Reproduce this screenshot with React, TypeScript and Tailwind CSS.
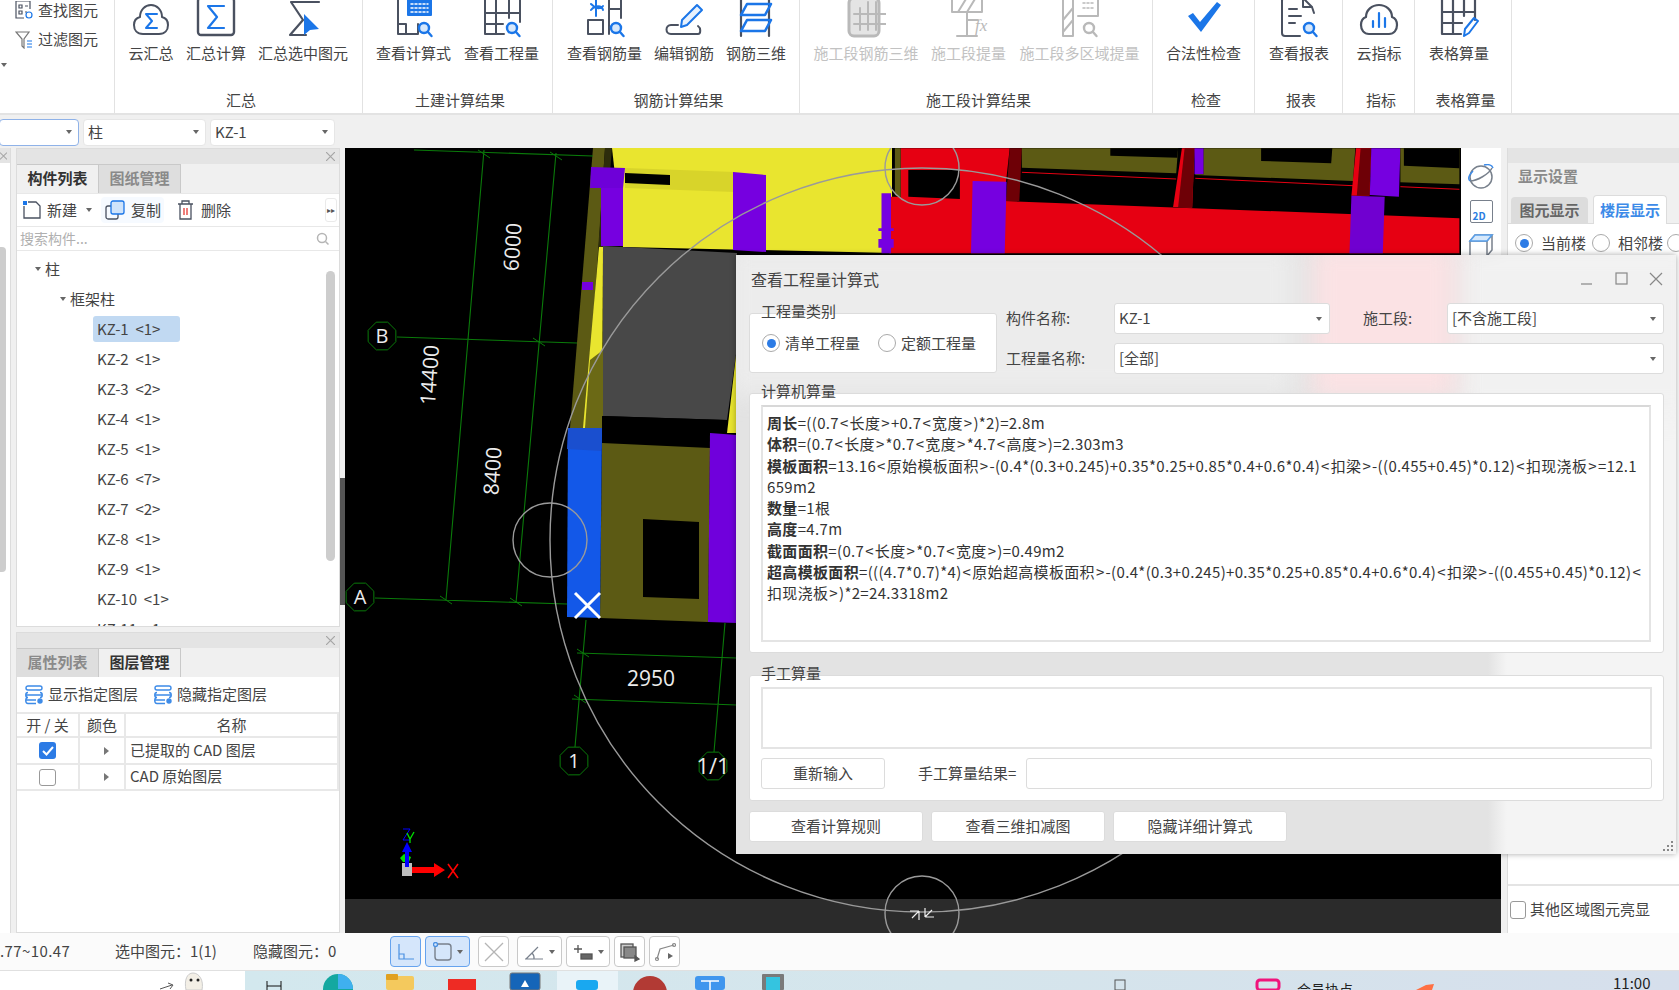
import React from "react";

const G = "#4a5160";
const B = "#1b76e8";
const L = "#b9b9b9";

function Svg({ children, w = 40, h = 40 }: { children: React.ReactNode; w?: number; h?: number }) {
  return (
    <svg width={w} height={h} viewBox={`0 0 ${w} ${h}`} fill="none" strokeWidth="2" strokeLinecap="round" strokeLinejoin="round">
      {children}
    </svg>
  );
}
const Mag = ({ c = B, x = 30, y = 28 }: { c?: string; x?: number; y?: number }) => (
  <g>
    <circle cx={x} cy={y} r="5" fill={c === B ? "#d7e8fb" : "none"} stroke={c} strokeWidth="2.4" />
    <path d={`M${x + 4} ${y + 4}l3.5 4`} stroke={c} strokeWidth="2.4" />
  </g>
);
const Ic: Record<string, React.ReactNode> = {
  cloudSum: (
    <Svg>
      <path d="M12 34c-6 0-9-4-9-9 0-4 2-7 6-8 0-7 5-12 11-12s11 5 11 12c4 1 6 4 6 8 0 5-3 9-9 9z" stroke={G} />
      <path d="M26 14h-11l6 7-6 7h11" stroke={B} />
    </Svg>
  ),
  sum: (
    <Svg>
      <rect x="2" y="-2" width="36" height="37" rx="3" stroke={G} strokeWidth="2.4" />
      <path d="M28 6h-16l9 11-9 11h16" stroke={B} strokeWidth="2.2" />
    </Svg>
  ),
  sumSel: (
    <Svg>
      <path d="M36 2h-28l12 18-13 15h16" stroke={G} strokeWidth="2.2" />
      <path d="M21 14l15 15-9 1-6 5z" fill={B} />
    </Svg>
  ),
  calc: (
    <Svg>
      <path d="M4 -3v37h20v-10M4 24h8v10" stroke={G} />
      <rect x="13" y="-2" width="25" height="18" rx="1" fill={B} />
      <path d="M17 4h17M17 8h17M17 12h17" stroke="#fff" strokeDasharray="2 2" strokeWidth="1.5" />
      <Mag x={30} y={28} />
    </Svg>
  ),
  grid: (
    <Svg>
      <path d="M22 34H3V-2h35v24M3 13h35M3 24h18M14 -2v36M27 -2v20" stroke={G} />
      <Mag x={30} y={28} />
    </Svg>
  ),
  rebar: (
    <Svg>
      <path d="M3 34V20h15v14H3M24 34V-2h12v20M24 9h12M3 -2v0" stroke={G} />
      <path d="M6 10c4-5 11-5 12 0M6 4c4 4 9 6 12 2M11 -2v18" stroke={B} />
      <Mag x={31} y={28} />
    </Svg>
  ),
  edit: (
    <Svg>
      <path d="M14 25H7c-6 0-6 9 0 9h27c3 0 3-6 0-8" stroke={G} />
      <path d="M17 27l1-7 15-15 5 5-15 15z" stroke={B} fill="#e7f1fd" />
    </Svg>
  ),
  bar3d: (
    <Svg>
      <path d="M5 -3v39M33 -3v39" stroke={G} strokeWidth="2.2" />
      <path d="M11 4h24l-6 11H5zM11 20h24l-6 11H5z" stroke={B} strokeWidth="2.6" />
    </Svg>
  ),
  g1: (
    <Svg>
      <rect x="3" y="-2" width="30" height="38" rx="5" fill="#e4e4e4" stroke={L} strokeWidth="3" />
      <path d="M14 8v22M22 2v28M30 2v28M8 14h32M8 24h32" stroke={L} />
    </Svg>
  ),
  g2: (
    <Svg>
      <path d="M3 -2h30v14H3zM9 12l8-13M18 12l8-13M18 12v24M8 36h20M19 20h10" stroke={L} />
      <text x="26" y="31" fontSize="17" fontStyle="italic" fill={L} stroke="none" fontFamily="'Liberation Serif',serif">fx</text>
    </Svg>
  ),
  g3: (
    <Svg>
      <path d="M3 36V-2h10v38zM3 20L13 8M3 32l10-12" stroke={L} />
      <path d="M18 -2h20v18H18" stroke={L} />
      <path d="M23 3h12M23 8h12" stroke={L} strokeDasharray="2 2" strokeWidth="1.5" />
      <Mag c={L} x={29} y={28} />
    </Svg>
  ),
  check: (
    <svg width="40" height="40" viewBox="0 0 40 40">
      <path d="M4 16l5-3 7 9L33 2l4 3-20 27z" fill={B} />
    </svg>
  ),
  report: (
    <Svg>
      <path d="M24 -2H6a3 3 0 0 0-3 3v32a3 3 0 0 0 3 3h15M24 -2v9h9l2 6M24 -2l9 9" stroke={G} />
      <path d="M10 9h8M10 16h12M10 23h6" stroke={G} />
      <Mag x={30} y={28} />
    </Svg>
  ),
  cloudBar: (
    <Svg>
      <path d="M10 34c-5 0-8-4-8-9 0-4 2-7 5-8 0-7 6-12 13-12s13 5 13 12c3 1 5 4 5 8 0 5-3 9-8 9z" stroke={G} strokeWidth="2.2" />
      <path d="M14 27v-6M20 27V13M26 27v-9" stroke={B} strokeWidth="2.2" />
    </Svg>
  ),
  gridEdit: (
    <Svg>
      <path d="M22 34H3V-2h33v22M3 12h33M3 23h20M14 -2v36M25 -2v18" stroke={G} strokeWidth="2.2" />
      <path d="M25 36l1-7 9-11 4 3-9 12z" stroke={B} />
    </Svg>
  ),
};

type Item = { t: string; i: string; w: number; gray?: boolean };
type Group = { label: string; w: number; pl: number; gap: number; items: Item[] };
const groups: Group[] = [
  { label: "汇总", w: 248, pl: 13, gap: 12, items: [{ t: "云汇总", i: "cloudSum", w: 46 }, { t: "汇总计算", i: "sum", w: 60 }, { t: "汇总选中图元", i: "sumSel", w: 90 }] },
  { label: "土建计算结果", w: 190, pl: 13, gap: 13, items: [{ t: "查看计算式", i: "calc", w: 75 }, { t: "查看工程量", i: "grid", w: 75 }] },
  { label: "钢筋计算结果", w: 247, pl: 14, gap: 12, items: [{ t: "查看钢筋量", i: "rebar", w: 75 }, { t: "编辑钢筋", i: "edit", w: 60 }, { t: "钢筋三维", i: "bar3d", w: 60 }] },
  { label: "施工段计算结果", w: 353, pl: 14, gap: 13, items: [{ t: "施工段钢筋三维", i: "g1", w: 104, gray: true }, { t: "施工段提量", i: "g2", w: 75, gray: true }, { t: "施工段多区域提量", i: "g3", w: 121, gray: true }] },
  { label: "检查", w: 102, pl: 13, gap: 0, items: [{ t: "合法性检查", i: "check", w: 75 }] },
  { label: "报表", w: 88, pl: 13, gap: 0, items: [{ t: "查看报表", i: "report", w: 62 }] },
  { label: "指标", w: 72, pl: 13, gap: 0, items: [{ t: "云指标", i: "cloudBar", w: 46 }] },
  { label: "表格算量", w: 97, pl: 13, gap: 0, items: [{ t: "表格算量", i: "gridEdit", w: 62 }] },
];

function Ribbon() {
  return (
    <div className="flex h-[115px] shrink-0 border-b-2 border-[#e3e3e3] bg-white">
      <div className="flex w-[115px] shrink-0 flex-col gap-[9px] border-r border-[#e2e2e2] pl-[15px] text-[15px] leading-[20px] text-[#444]">
        <div className="flex items-center gap-[4px]">
          <svg width="19" height="19" viewBox="0 0 19 19" fill="none" stroke={G} strokeWidth="1.2">
            <path d="M1 0h14v8M1 0v17h8" />
            <path d="M4 4h3v3H4zM4 10h3v3H4zM10 5h3M10 11h2" />
            <circle cx="14" cy="14" r="3" stroke={B} />
          </svg>
          <span>查找图元</span>
        </div>
        <div className="flex items-center gap-[4px]">
          <svg width="19" height="19" viewBox="0 0 19 19" fill="none" stroke="#777" strokeWidth="1.2">
            <path d="M1 2h13L9 9v9l-2-2V9z" />
            <path d="M12 11h5M12 14h5M12 17h5" stroke={B} />
          </svg>
          <span>过滤图元</span>
        </div>
        <div className="ml-[-14px] mt-[5px] h-0 w-0 border-x-[3px] border-t-[4px] border-x-transparent border-t-[#666]" />
      </div>
      {groups.map((g) => (
        <div key={g.label} className="flex shrink-0 flex-col border-r border-[#e2e2e2]" style={{ width: g.w }}>
          <div className="flex h-[91px] items-start" style={{ paddingLeft: g.pl, gap: g.gap }}>
            {g.items.map((it) => (
              <div key={it.t} className="flex flex-col items-center" style={{ width: it.w }}>
                <div className="h-[43px] overflow-hidden">{Ic[it.i]}</div>
                <div className={`whitespace-nowrap text-[15px] leading-[20px] ${it.gray ? "text-[#c2c2c2]" : "text-[#444]"}`}>{it.t}</div>
              </div>
            ))}
          </div>
          <div className="pl-[5px] text-center text-[15px] leading-[18px] text-[#444]">{g.label}</div>
        </div>
      ))}
      <div className="flex-1" />
    </div>
  );
}

const Caret = ({ cls = "" }: { cls?: string }) => (
  <span className={`h-0 w-0 border-x-[3px] border-t-[4px] border-x-transparent border-t-[#666] ${cls}`} />
);

function Combo({ text, w, active }: { text: string; w: number; active?: boolean }) {
  return (
    <div
      className={`flex h-[27px] items-center justify-between rounded-[4px] border bg-white pl-[4px] pr-[6px] text-[15px] text-[#444] ${active ? "border-[#8fb2e8]" : "border-[#e6e6e6]"}`}
      style={{ width: w }}
    >
      <span>{text}</span>
      <Caret />
    </div>
  );
}

function PanelHead({ close = true }: { close?: boolean }) {
  return (
    <div className="flex h-[15px] shrink-0 items-center justify-end bg-[#e4e4e4] pr-[4px]">
      {close && (
        <svg width="9" height="9" viewBox="0 0 9 9" stroke="#a5a5a5" strokeWidth="1.2">
          <path d="M0 0l9 9M9 0L0 9" />
        </svg>
      )}
    </div>
  );
}

function Tabs({ active, a, b }: { active: 0 | 1; a: string; b: string }) {
  const cls = (on: boolean) =>
    `flex h-full w-[82px] items-center justify-center border-r border-t border-[#c9c9c9] pb-[2px] text-[15px] font-bold ${on ? "bg-[#f0f0f0] text-[#333]" : "bg-[#dedede] text-[#8a8a8a]"}`;
  return (
    <div className="flex h-[29px] shrink-0 bg-[#f0f0f0]">
      <div className={cls(active === 0)}>{a}</div>
      <div className={cls(active === 1)}>{b}</div>
    </div>
  );
}

const kz = ["KZ-1 <1>", "KZ-2 <1>", "KZ-3 <2>", "KZ-4 <1>", "KZ-5 <1>", "KZ-6 <7>", "KZ-7 <2>", "KZ-8 <1>", "KZ-9 <1>", "KZ-10 <1>", "KZ-11 <1>"];

function LayerIcon() {
  return (
    <svg width="20" height="20" viewBox="0 0 20 20" fill="none" stroke="#3d8be8" strokeWidth="1.4">
      <rect x="2" y="1" width="16" height="4" rx="2" />
      <path d="M2 10h16M4 7.5c-3 0-3 5 0 5M16 7.5c3 0 3 5 0 5M2 15h10M4 12.5c-3 0-3 6 0 6h8" />
      <circle cx="16" cy="16" r="2" fill="#3d8be8" />
    </svg>
  );
}

const RowArrow = () => <span className="ml-[8px] h-0 w-0 border-y-[4px] border-l-[5px] border-y-transparent border-l-[#777]" />;

function LeftPanels() {
  return (
    <div className="flex h-full w-[324px] shrink-0 flex-col gap-[5px]">
      <div className="flex h-[479px] flex-col border border-[#dcdcdc] bg-white">
        <PanelHead />
        <Tabs active={0} a="构件列表" b="图纸管理" />
        <div className="flex h-[34px] shrink-0 items-center border-y border-[#e8e8e8] pl-[5px] text-[15px] text-[#444]">
          <svg width="20" height="20" viewBox="0 0 20 20" fill="none" stroke={G} strokeWidth="1.3">
            <path d="M6 2h8l4 4v12H2V6" />
            <path d="M1 1h4v4H1z" fill={B} stroke="none" />
          </svg>
          <span className="ml-[5px]">新建</span>
          <Caret cls="ml-[9px]" />
          <div className="ml-[9px] flex h-[26px] w-[63px] items-center rounded-[4px] bg-[#f6faff] pl-[4px]">
            <svg width="20" height="20" viewBox="0 0 20 20" fill="none" strokeWidth="1.3">
              <rect x="1" y="6" width="12" height="13" rx="2" stroke={G} />
              <rect x="6" y="1" width="13" height="13" rx="2" fill="#cfe3fa" stroke={B} />
            </svg>
            <span className="ml-[6px]">复制</span>
          </div>
          <svg className="ml-[13px]" width="17" height="20" viewBox="0 0 17 20" fill="none" stroke={G} strokeWidth="1.3">
            <path d="M1 4h15M5 4V1h7v3M3 4v15h11V4" />
            <path d="M7 8v7M10 8v7" stroke="#e53935" />
          </svg>
          <span className="ml-[7px]">删除</span>
          <div className="ml-auto mr-[2px] flex h-[24px] w-[12px] items-center justify-center rounded-[3px] border border-[#eaeaea] text-[8px] leading-none text-[#555]">▸▸</div>
        </div>
        <div className="flex h-[24px] shrink-0 items-center justify-between border-b border-[#e8e8e8] pl-[3px] pr-[9px] text-[14px] text-[#b0b0b0]">
          <span>搜索构件...</span>
          <svg width="14" height="14" viewBox="0 0 14 14" fill="none" stroke="#b5b5b5" strokeWidth="1.5">
            <circle cx="6" cy="6" r="4.5" />
            <path d="M9.5 9.5l3 3" />
          </svg>
        </div>
        <div className="relative flex-1 overflow-hidden text-[15px] leading-[30px] text-[#444]">
          <div className="flex h-[30px] items-center pl-[18px] pt-[5px]">
            <Caret cls="mr-[4px]" />
            柱
          </div>
          <div className="flex h-[30px] items-center pl-[43px] pt-[5px]">
            <Caret cls="mr-[4px]" />
            框架柱
          </div>
          <div className="pl-[80px] pt-[3px]">
            {kz.map((k, i) => (
              <div key={k} className="flex h-[30px] items-center">
                <span className={`ml-[-4px] flex h-[26px] items-center whitespace-pre rounded-[3px] pl-[4px] ${i === 0 ? "w-[87px] bg-[#c1d9f2]" : ""}`}>
                  {k.replace(" ", "  ")}
                </span>
              </div>
            ))}
          </div>
          <div className="absolute right-[4px] top-[20px] h-[290px] w-[9px] rounded-[5px] bg-[#cdcdcd]" />
        </div>
      </div>
      <div className="flex flex-1 flex-col border border-[#dcdcdc] bg-white">
        <PanelHead />
        <Tabs active={1} a="属性列表" b="图层管理" />
        <div className="flex h-[35px] shrink-0 items-center pl-[7px] text-[15px] text-[#444]">
          <LayerIcon />
          <span className="ml-[4px]">显示指定图层</span>
          <span className="ml-[15px]"><LayerIcon /></span>
          <span className="ml-[4px]">隐藏指定图层</span>
        </div>
        <div className="grid grid-cols-[63px_46px_1fr] text-[15px] leading-[22px] text-[#444]">
          {["开 / 关", "颜色", "名称"].map((t) => (
            <div key={t} className="h-[26px] border-b-2 border-r-2 border-t-2 border-[#e8e8e8] text-center">{t}</div>
          ))}
          <div className="flex h-[27px] items-center justify-center border-b-2 border-r-2 border-[#e8e8e8]">
            <span className="flex h-[17px] w-[17px] items-center justify-center rounded-[3px] bg-[#2c7be5]">
              <svg width="12" height="10" viewBox="0 0 12 10" fill="none" stroke="#fff" strokeWidth="2"><path d="M1 5l3.5 3.5L11 1" /></svg>
            </span>
          </div>
          <div className="flex h-[27px] items-center justify-center border-b-2 border-r-2 border-[#e8e8e8]"><RowArrow /></div>
          <div className="flex h-[27px] items-center border-b-2 border-r-2 border-[#e8e8e8] pb-[2px] pl-[4px]">已提取的 CAD 图层</div>
          <div className="flex h-[26px] items-center justify-center border-b-2 border-r-2 border-[#e8e8e8]">
            <span className="h-[17px] w-[17px] rounded-[3px] border border-[#999] bg-white" />
          </div>
          <div className="flex h-[26px] items-center justify-center border-b-2 border-r-2 border-[#e8e8e8]"><RowArrow /></div>
          <div className="flex h-[26px] items-center border-b-2 border-r-2 border-[#e8e8e8] pb-[2px] pl-[4px]">CAD 原始图层</div>
        </div>
      </div>
    </div>
  );
}

const pts = (s: string, ox: number, oy: number, sx: number, sy: number) =>
  s
    .split(" ")
    .map((p) => {
      const [x, y] = p.split(",").map(Number);
      return `${(ox + x / sx).toFixed(1)},${(oy + y / sy).toFixed(1)}`;
    })
    .join(" ");
const Z = (s: string) => pts(s, 870, 145, 2.613, 3);

const grn = "#0a7a0a";
const Oct = ({ x, y, t, fs = 20 }: { x: number; y: number; t: string; fs?: number }) => (
  <g>
    <polygon
      points={[0, 1, 2, 3, 4, 5, 6, 7].map((i) => `${x + 15 * Math.cos((i * Math.PI) / 4 + 0.39)},${y + 15 * Math.sin((i * Math.PI) / 4 + 0.39)}`).join(" ")}
      stroke={grn}
      fill="none"
    />
    <text x={x} y={y + fs * 0.36} textAnchor="middle" fontSize={fs} fill="#ececec" fontFamily="'Open Sans',sans-serif">{t}</text>
  </g>
);
const Dim = ({ x, y, t, r = -86 }: { x: number; y: number; t: string; r?: number }) => (
  <text x={x} y={y} transform={`rotate(${r} ${x} ${y})`} textAnchor="middle" dominantBaseline="central" fontSize="21" fill="#ececec" fontFamily="'Open Sans',sans-serif">{t}</text>
);
const Tick = ({ x, y }: { x: number; y: number }) => <path d={`M${x - 6} ${y - 4}l12 8`} stroke={grn} />;

function Canvas() {
  return (
    <div className="relative h-full w-[1156px] shrink-0 bg-black">
      <svg className="block" width="1156" height="785" viewBox="345 148 1156 785">
        <rect x="345" y="899" width="1156" height="34" fill="#2b2b2b" />
        <polygon points="612,148 892,148 892,253 623,247" fill="#e9e52f" />
        <polygon points="593,148 605,148 587,428 570,428" fill="#5c5a14" />
        <polygon points="605,148 612,148 600,300 590,428 586,428" fill="#2d2c0c" />
        <polygon points="625,168 735,172 735,192 625,188" fill="#d8d42a" />
        <polygon points="625,173 670,175 670,185 625,183" fill="#000" />
        <polygon points="591,167 625,168 623,188 590,188" fill="#6e00d8" />
        <rect x="601" y="188" width="22" height="58" fill="#7600e0" />
        <rect x="582" y="282" width="11" height="8" fill="#7600e0" />
        <polygon points="733,172 766,175 766,252 733,250" fill="#7600e0" />
        <polygon points="599,247 603,247 602,428 583,428" fill="#e9e52f" />
        <polygon points="603,350 603,428 585,428 590,360" fill="#6b6915" />
        <polygon points="603,246 737,253 737,347 727,420 603,416" fill="#484848" />
        <polygon points="737,347 737,433 727,433" fill="#e9e52f" />
        <polygon points="602,416 727,420 727,447 602,443" fill="#000" />
        <polygon points="602,443 710,448 708,622 600,618" fill="#5c5a14" />
        <polygon points="710,433 737,435 737,623 708,622" fill="#7000dc" />
        <polygon points="643,519 699,522 699,599 643,597" fill="#000" />
        <polygon points="568,428 602,428 600,618 567,617" fill="#1358e8" />
        <polygon points="568,428 602,428 601,451 567,449" fill="#1a4fcf" />
        <path d="M575 593l25 25M600 593l-25 25" stroke="#fff" strokeWidth="3" />
        <polygon points={Z("80,10 365,10 350,168 1540,220 1540,325 50,325 50,155 80,155")} fill="#e60012" />
        <polygon points={Z("65,10 80,10 80,155 65,150")} fill="#5c5a14" />
        <polygon points={Z("100,75 235,75 235,162 100,155")} fill="#000" />
        <polygon points={Z("365,10 397,10 390,168 355,168")} fill="#6e0006" />
        <polygon points={Z("268,108 357,110 352,325 264,325")} fill="#7600e0" />
        <polygon points={Z("30,145 55,145 55,250 62,250 62,258 55,258 55,282 62,282 62,308 55,308 55,325 30,325 30,308 22,308 22,282 30,282 30,258 22,258 22,250 30,250")} fill="#7600e0" />
        <polygon points={Z("397,10 805,10 800,85 397,68")} fill="#5c5a14" />
        <polygon points={Z("628,10 805,10 803,38 628,32")} fill="#000" />
        <polygon points={Z("815,10 848,10 842,188 792,186")} fill="#e60012" />
        <polygon points={Z("822,10 848,10 842,188 805,187")} fill="#6e0006" />
        <polygon points={Z("848,10 872,10 872,88 848,88")} fill="#7600e0" />
        <polygon points={Z("872,10 1268,10 1262,108 850,90 850,88 872,88")} fill="#5c5a14" />
        <polygon points={Z("1022,10 1208,10 1205,55 1022,48")} fill="#000" />
        <polygon points={Z("1270,10 1310,10 1305,152 1258,152")} fill="#e60012" />
        <polygon points={Z("1282,10 1310,10 1305,152 1272,152")} fill="#6e0006" />
        <polygon points={Z("1310,10 1386,10 1382,155 1306,150")} fill="#7600e0" />
        <polygon points={Z("1258,152 1345,155 1340,325 1253,325")} fill="#7000d0" />
        <polygon points={Z("1386,10 1540,10 1540,118 1386,112")} fill="#5c5a14" />
        <polygon points={Z("1395,10 1540,10 1540,70 1395,62")} fill="#000" />
        <polyline points={Z("397,82 800,102")} stroke="#e60012" fill="none" />
        <polyline points={Z("850,100 1262,122")} stroke="#e60012" fill="none" />
        <polyline points={Z("1386,125 1540,133")} stroke="#e60012" fill="none" />
        <g stroke={grn} fill="none" strokeWidth="1.1">
          <path d="M414 150L593 156M484 150L446 600M556 153L516 603M397 337L577 343M375 598L567 604" />
          <path d="M586 620L575 747M725 623L714 752M577 653L737 658M572 699L737 705" />
        </g>
        <Tick x={484} y={154} /><Tick x={556} y={156} /><Tick x={539} y={342} /><Tick x={446} y={600} /><Tick x={516} y={602} /><Tick x={583} y={653} /><Tick x={580} y={699} />
        <Oct x={382} y={336} t="B" />
        <Oct x={360} y={597} t="A" />
        <Oct x={574} y={761} t="1" />
        <Oct x={713} y={766} t="1/1" fs={22} />
        <Dim x={512} y={247} t="6000" />
        <Dim x={429} y={375} t="14400" />
        <Dim x={492} y={471} t="8400" />
        <text x={651} y={686} textAnchor="middle" fontSize="21" fill="#ececec" fontFamily="'Open Sans',sans-serif">2950</text>
        <g stroke="#9a9a9a" fill="none" strokeWidth="1.4">
          <circle cx="922" cy="540" r="372" />
          <circle cx="550" cy="540" r="37" />
          <circle cx="922" cy="168" r="37" />
          <circle cx="922" cy="913" r="37" />
        </g>
        <path d="M925 917l7-7M925 917v-9M925 917h9M919 911l-7 7M919 911v9M919 911h-9" stroke="#eee" strokeWidth="1.2" fill="none" />
        <rect x="402" y="863" width="10" height="13" fill="#bdbdbd" />
        <path d="M412 867h22v-4l11 7-11 7v-4h-22z" fill="#ff0000" />
        <path d="M404 854l7 3-2 5h-6l-3-4z" fill="#00e000" />
        <path d="M407 842l5 10h-3v15h-4v-15h-3z" fill="#0000ff" />
        <path d="M403 829h7l-7 11h7" stroke="#0000ff" fill="none" />
        <path d="M407 833l3 6 4-7M410 839v4" stroke="#00e000" fill="none" strokeWidth="1.3" />
        <path d="M448 864l10 14M458 864l-10 14" stroke="#ff0000" strokeWidth="1.6" />
      </svg>
      <div className="absolute right-0 top-0 flex h-[120px] w-[40px] flex-col items-center gap-[10px] bg-white pt-[16px]">
        <svg width="28" height="26" viewBox="0 0 28 26" fill="none" strokeWidth="1.5">
          <circle cx="14" cy="13" r="11" stroke="#78808c" />
          <path d="M3 17C10 17 22 10 25 4" stroke="#78808c" />
          <path d="M3 17C0 14 3 10 6 7M17 1c4-1 8 0 9 3" stroke="#3d8be8" />
        </svg>
        <div className="relative h-[23px] w-[23px] rounded-[2px] border-[1.5px] border-[#78808c]">
          <span className="absolute bottom-[-1px] left-[2px] text-[10px] font-bold leading-[14px] text-[#2a7de1]">2D</span>
        </div>
        <svg width="26" height="24" viewBox="0 0 26 24" fill="none" strokeWidth="1.5">
          <path d="M2 8h17v15H2zM2 8l5-6h17l-5 6M24 2v15l-5 6" stroke="#78808c" />
          <path d="M7 2h17l-5 6H2z" fill="#d6e8fb" stroke="#5aa0ea" />
        </svg>
      </div>
      <div className="absolute left-[-5px] top-[330px] h-[127px] w-[5px] bg-[#555]" />
    </div>
  );
}

function Radio({ on }: { on?: boolean }) {
  return (
    <span className="flex h-[18px] w-[18px] shrink-0 items-center justify-center rounded-full border border-[#aaa] bg-white">
      {on && <span className="h-[9px] w-[9px] rounded-full bg-[#2c7be5]" />}
    </span>
  );
}

function RightPanel() {
  return (
    <div className="relative ml-[6px] flex h-full flex-1 flex-col overflow-hidden border-l border-[#dcdcdc] bg-white">
      <PanelHead close={false} />
      <div className="flex h-[27px] shrink-0 items-center bg-[#f0f0f0] pl-[10px] text-[15px] font-bold text-[#8a8a8a]">显示设置</div>
      <div className="flex h-[34px] shrink-0 items-end gap-[5px] border-b border-[#dcdcdc] bg-[#f0f0f0] pl-[3px]">
        <div className="flex h-[26px] w-[77px] items-center justify-center rounded-t-[4px] bg-[#dcdcdc] text-[15px] font-bold text-[#666]">图元显示</div>
        <div className="mb-[-1px] flex h-[29px] w-[74px] items-center justify-center rounded-t-[4px] border border-b-0 border-[#dcdcdc] bg-white text-[15px] font-bold text-[#3d8be8]">楼层显示</div>
      </div>
      <div className="flex h-[38px] items-center pl-[7px] text-[15px] text-[#444]">
        <Radio on />
        <span className="ml-[8px] whitespace-nowrap">当前楼</span>
        <span className="ml-[6px]"><Radio /></span>
        <span className="ml-[8px] whitespace-nowrap">相邻楼</span>
        <span className="ml-[4px]"><Radio /></span>
      </div>
      <div className="flex-1" />
      <div className="flex h-[49px] items-center border-t-2 border-[#e4e4e4] pl-[2px] text-[15px] text-[#444]">
        <span className="h-[18px] w-[16px] rounded-[3px] border border-[#999]" />
        <span className="ml-[4px]">其他区域图元亮显</span>
      </div>
    </div>
  );
}

function Legend({ t }: { t: string }) {
  return <span className="absolute left-[11px] top-[-13px] text-[15px] leading-[20px] text-[#444]">{t}</span>;
}

function Btn({ t, w }: { t: string; w: number }) {
  return (
    <div className="flex h-[31px] shrink-0 items-center justify-center rounded-[3px] border border-[#dcdcdc] bg-white text-[15px] text-[#444]" style={{ width: w }}>{t}</div>
  );
}

function DCombo({ t, w, grow }: { t: string; w?: number; grow?: boolean }) {
  return (
    <div className={`flex h-[31px] items-center justify-between rounded-[3px] border border-[#dcdcdc] bg-white pl-[4px] pr-[7px] text-[15px] text-[#444] ${grow ? "flex-1" : ""}`} style={w ? { width: w } : undefined}>
      <span>{t}</span>
      <Caret />
    </div>
  );
}

const lines: [string, string][] = [
  ["周长", "=((0.7<长度>+0.7<宽度>)*2)=2.8m"],
  ["体积", "=(0.7<长度>*0.7<宽度>*4.7<高度>)=2.303m3"],
  ["模板面积", "=13.16<原始模板面积>-(0.4*(0.3+0.245)+0.35*0.25+0.85*0.4+0.6*0.4)<扣梁>-((0.455+0.45)*0.12)<扣现浇板>=12.1\n659m2"],
  ["数量", "=1根"],
  ["高度", "=4.7m"],
  ["截面面积", "=(0.7<长度>*0.7<宽度>)=0.49m2"],
  ["超高模板面积", "=(((4.7*0.7)*4)<原始超高模板面积>-(0.4*(0.3+0.245)+0.35*0.25+0.85*0.4+0.6*0.4)<扣梁>-((0.455+0.45)*0.12)<\n扣现浇板>)*2=24.3318m2"],
];

function Dialog() {
  return (
    <div className="absolute left-[736px] top-[255px] flex h-[599px] w-[940px] flex-col overflow-hidden bg-[linear-gradient(90deg,#e3e3e3_0%,#e3e3e3_80%,#f4f4f4_82%,#f4f4f4_100%)] pl-[13px] pr-[12px] shadow-[0_0_6px_rgba(0,0,0,0.35)]">
      <div className="absolute left-[721px] top-[-10px] h-[170px] w-[240px] bg-[#f1f1f1] blur-md" />
      <div className="absolute left-[575px] top-[-10px] h-[155px] w-[145px] bg-[#fbe2e4] blur-md" />
      <div className="absolute left-[-10px] top-[-10px] h-[150px] w-[570px] bg-[#ececec] blur-md" />
      <div className="relative flex h-[47px] shrink-0 items-center justify-between pl-[2px] pr-[1px] text-[#555]">
        <span className="text-[16px] text-[#444]">查看工程量计算式</span>
        <div className="flex items-center gap-[21px]">
          <svg width="14" height="14" viewBox="0 0 14 14" fill="none" stroke="#888" strokeWidth="1.2"><path d="M1 12h11" /></svg>
          <svg width="13" height="14" viewBox="0 0 13 14" fill="none" stroke="#888" strokeWidth="1.2"><rect x="1" y="1" width="11" height="11" /></svg>
          <svg width="14" height="14" viewBox="0 0 14 14" fill="none" stroke="#888" strokeWidth="1.2"><path d="M1 1l12 12M13 1L1 13" /></svg>
        </div>
      </div>
      <div className="relative flex h-[72px] shrink-0 gap-[9px]">
        <div className="relative mt-[11px] flex h-[60px] w-[248px] shrink-0 items-center rounded-[3px] border border-[#dcdcdc] bg-white pl-[12px] text-[15px] text-[#444]">
          <Legend t="工程量类别" />
          <Radio on />
          <span className="ml-[5px]">清单工程量</span>
          <span className="ml-[18px]"><Radio /></span>
          <span className="ml-[5px]">定额工程量</span>
        </div>
        <div className="flex flex-1 flex-col gap-[9px] pt-[1px] text-[15px] text-[#444]">
          <div className="flex items-center">
            <span className="w-[108px] shrink-0">构件名称:</span>
            <DCombo t="KZ-1" w={216} />
            <span className="ml-[33px] w-[84px] shrink-0">施工段:</span>
            <DCombo t="[不含施工段]" grow />
          </div>
          <div className="flex items-center">
            <span className="w-[108px] shrink-0">工程量名称:</span>
            <DCombo t="[全部]" grow />
          </div>
        </div>
      </div>
      <div className="relative mt-[19px] h-[260px] shrink-0 rounded-[3px] border border-[#dcdcdc] bg-white pl-[11px] pr-[12px] pt-[11px]">
        <Legend t="计算机算量" />
        <div className="h-[237px] overflow-hidden whitespace-pre border-2 border-[#e4e4e4] border-t-[#d8d8d8] pl-[4px] pt-[5px] text-[15px] leading-[21.3px] tracking-[0.33px] text-[#333]">
          {lines.map(([a, b]) => (
            <div key={a}>
              <b>{a}</b>
              {b.split(/([<>])/).map((p, i) =>
                p === "<" || p === ">" ? (
                  <span key={i} className="px-[1px]">{p}</span>
                ) : (
                  <React.Fragment key={i}>{p}</React.Fragment>
                )
              )}
            </div>
          ))}
        </div>
      </div>
      <div className="relative mt-[22px] h-[126px] shrink-0 rounded-[3px] border border-[#dcdcdc] bg-white px-[11px] pt-[11px]">
        <Legend t="手工算量" />
        <div className="h-[62px] border-2 border-[#e4e4e4]" />
        <div className="mt-[9px] flex items-center text-[15px] text-[#444]">
          <Btn t="重新输入" w={124} />
          <span className="ml-[33px] w-[108px] shrink-0 whitespace-nowrap">手工算量结果=</span>
          <div className="h-[31px] flex-1 rounded-[3px] border border-[#dcdcdc]" />
        </div>
      </div>
      <div className="relative mt-[10px] flex gap-[8px]">
        <Btn t="查看计算规则" w={174} />
        <Btn t="查看三维扣减图" w={174} />
        <Btn t="隐藏详细计算式" w={174} />
      </div>
      <svg className="absolute bottom-[3px] right-[3px]" width="10" height="10" viewBox="0 0 10 10" fill="#888">
        <rect x="8" y="0" width="2" height="2" /><rect x="4" y="4" width="2" height="2" /><rect x="8" y="4" width="2" height="2" />
        <rect x="0" y="8" width="2" height="2" /><rect x="4" y="8" width="2" height="2" /><rect x="8" y="8" width="2" height="2" />
      </svg>
    </div>
  );
}

function ToolBtn({ w, on, caret, children }: { w: number; on?: boolean; caret?: boolean; children: React.ReactNode }) {
  return (
    <div className={`flex h-[31px] shrink-0 items-center justify-center gap-[5px] rounded-[4px] border ${on ? "border-[#66a3ee] bg-[#d5e6fb]" : "border-[#c9c9c9] bg-white"}`} style={{ width: w }}>
      {children}
      {caret && <Caret />}
    </div>
  );
}

function StatusBar() {
  return (
    <div className="flex h-[38px] shrink-0 items-center border-b border-[#e0e0e0] bg-[#fbfbfb] text-[15px] text-[#444]">
      <span className="w-[115px] shrink-0 tracking-[0.4px]">.77~10.47</span>
      <span className="w-[138px] shrink-0 whitespace-nowrap">选中图元：1(1)</span>
      <span className="w-[137px] shrink-0 whitespace-nowrap">隐藏图元：0</span>
      <div className="flex gap-[4px]">
        <ToolBtn w={31} on>
          <svg width="18" height="18" viewBox="0 0 18 18" fill="none" stroke="#4a90e2" strokeWidth="1.2"><path d="M2 1v15h15M2 11h5v5" /></svg>
        </ToolBtn>
        <ToolBtn w={45} on caret>
          <svg width="19" height="19" viewBox="0 0 19 19" fill="none" stroke="#78808c" strokeWidth="1.4"><rect x="2" y="2" width="16" height="16" rx="3" /><circle cx="2.5" cy="2.5" r="2" fill="#d5e6fb" stroke="#4a90e2" /></svg>
        </ToolBtn>
        <div className="w-0" />
        <ToolBtn w={31}>
          <svg width="20" height="20" viewBox="0 0 20 20" stroke="#b5b5b5" strokeWidth="1.3"><path d="M1 1l18 18M19 1L1 19" /></svg>
        </ToolBtn>
        <div className="w-0" />
        <ToolBtn w={45} caret>
          <svg width="20" height="20" viewBox="0 0 20 20" fill="none" stroke="#78808c" strokeWidth="1.2"><path d="M1 17h18M2 17L14 5M8 11a7 7 0 0 1 2 6" /></svg>
        </ToolBtn>
        <ToolBtn w={44} caret>
          <svg width="20" height="20" viewBox="0 0 20 20" fill="none" stroke="#555" strokeWidth="1.3"><path d="M1 7h8M5 3v8" /><rect x="8" y="12" width="11" height="5" fill="#666" /></svg>
        </ToolBtn>
        <ToolBtn w={31}>
          <svg width="20" height="20" viewBox="0 0 20 20" fill="none" stroke="#555" strokeWidth="1.3"><rect x="1" y="2" width="12" height="13" fill="#ccc" /><rect x="4" y="5" width="12" height="11" fill="#888" /><path d="M15 14l4 3-4 2z" fill="#555" /></svg>
        </ToolBtn>
        <ToolBtn w={31}>
          <svg width="22" height="20" viewBox="0 0 22 20" fill="none" stroke="#888" strokeWidth="1.2"><path d="M3 17L6 7l14-4" /><circle cx="3" cy="17" r="1.5" /><circle cx="20" cy="3" r="1.5" /><path d="M14 11l5 3-5 3z" fill="#666" stroke="none" /></svg>
        </ToolBtn>
      </div>
    </div>
  );
}

function Taskbar() {
  return (
    <div className="flex h-[19px] shrink-0 overflow-hidden text-[14px]">
      <div className="relative w-[245px] shrink-0 bg-white">
        <svg className="absolute left-[160px] top-[1px]" width="58" height="18" viewBox="0 0 58 18" fill="none">
          <path d="M0 17l12-4M8 11l5 2-3 4" stroke="#555" />
          <path d="M26 18c-2-10 1-17 7-17s11 7 9 17z" fill="#f3efe6" stroke="#ccc" />
          <circle cx="31" cy="8" r="1.5" fill="#222" /><circle cx="38" cy="8" r="1.5" fill="#222" />
        </svg>
      </div>
      <div className="relative flex-1 bg-[linear-gradient(90deg,#d3e8ee,#d5e5ec_50%,#d6dfec)]">
        <div className="absolute left-[312px] top-0 h-full w-[61px] bg-[#e9f3f8]" />
        <svg className="absolute left-0 top-0" width="1434" height="19" viewBox="0 0 1434 19" fill="none">
          <path d="M22 10v9M36 10v9M22 15h14" stroke="#111" />
          <circle cx="93" cy="18" r="15" fill="#14a8a0" />
          <path d="M93 3a15 15 0 0 1 15 15h-15z" fill="#3fb0ef" />
          <rect x="141" y="5" width="28" height="14" rx="2" fill="#f4c95d" />
          <rect x="141" y="3" width="12" height="6" rx="1" fill="#e0a020" />
          <rect x="203" y="8" width="14" height="11" fill="#ee2b24" /><rect x="217" y="8" width="14" height="11" fill="#ee2b24" />
          <rect x="265" y="2" width="30" height="17" rx="2" fill="#1565b8" stroke="#777" />
          <path d="M280 9l4 7h-8z" fill="#fff" />
          <rect x="331" y="9" width="22" height="10" rx="3" fill="#19a8f0" />
          <circle cx="405" cy="22" r="17" fill="#b23a34" />
          <rect x="450" y="5" width="30" height="14" rx="3" fill="#3f96ee" />
          <path d="M456 10h18M465 10v9" stroke="#fff" strokeWidth="1.5" />
          <rect x="517" y="3" width="22" height="16" rx="1" fill="#7a7a7a" /><rect x="521" y="6" width="14" height="13" fill="#34c4e0" />
          <rect x="870" y="9" width="10" height="10" fill="none" stroke="#555" />
          <rect x="1012" y="9" width="22" height="10" rx="3" fill="none" stroke="#f0147c" strokeWidth="3" />
          <path d="M1171 19l10-5 8-1-2 6z" fill="#ff7043" />
        </svg>
        <span className="absolute left-[1052px] top-[8px] text-[#222]">会员协点</span>
        <span className="absolute left-[1368px] top-[2px] text-[15px] leading-[20px] text-[#222]">11:00</span>
      </div>
    </div>
  );
}

export default function App() {
  return (
    <div className="relative flex h-[990px] w-[1679px] flex-col overflow-hidden bg-[#f0f0f0] font-['Noto_Sans_CJK_SC','Liberation_Sans',sans-serif]">
      <Ribbon />
      <div className="flex h-[33px] shrink-0 items-center gap-[4px] bg-[#f0f0f0] pt-[1px]">
        <div className="ml-[-1px]"><Combo text="" w={80} active /></div>
        <Combo text="柱" w={123} />
        <Combo text="KZ-1" w={125} />
      </div>
      <div className="flex h-[785px] shrink-0">
        <div className="mr-[5px] w-[11px] shrink-0 border-r border-[#dcdcdc] bg-white">
          <div className="flex h-[15px] items-center justify-end bg-[#e4e4e4] pr-[3px]">
            <svg width="8" height="8" viewBox="0 0 8 8" stroke="#a5a5a5" strokeWidth="1.2"><path d="M0 0l8 8M8 0L0 8" /></svg>
          </div>
          <div className="mt-[84px] h-[325px] w-[6px] rounded-r-[4px] bg-[#cdcdcd]" />
        </div>
        <LeftPanels />
        <div className="w-[5px] shrink-0" />
        <Canvas />
        <RightPanel />
      </div>
      <StatusBar />
      <Taskbar />
      <Dialog />
    </div>
  );
}
